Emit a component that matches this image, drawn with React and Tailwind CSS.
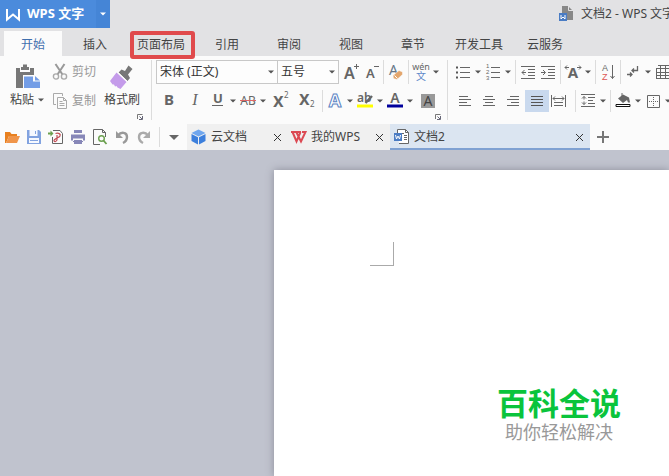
import React, { useState } from "react";

const menuTabs = [
  "开始",
  "插入",
  "页面布局",
  "引用",
  "审阅",
  "视图",
  "章节",
  "开发工具",
  "云服务",
];

function Caret({ className = "text-[#555]" }) {
  return (
    <svg width="6" height="4" viewBox="0 0 6 4" className={className}>
      <path d="M0 0.5h6L3 3.5z" fill="currentColor" />
    </svg>
  );
}

function Icon({ w = 16, h = 16, children }) {
  return (
    <svg
      width={w}
      height={h}
      viewBox={`0 0 ${w} ${h}`}
      fill="none"
      stroke="#666"
      className="shrink-0 overflow-visible"
    >
      {children}
    </svg>
  );
}

// Toolbar button, with a small arrow when it opens a menu
function Tool({ label, width = "w-5", menu, active, children }) {
  return (
    <button
      type="button"
      aria-label={label}
      className={`flex shrink-0 h-full items-center ${
        active ? "bg-[#c9d9ee]" : "hover:bg-[#e4ecf7]"
      }`}
    >
      <span className={`flex justify-center ${width}`}>{children}</span>
      {menu && (
        <span className="w-[10px] flex justify-center">
          <Caret />
        </span>
      )}
    </button>
  );
}

function Sep() {
  return (
    <span className="w-[5px] shrink-0 h-full flex justify-center">
      <span className="w-px h-full bg-[#dcdcdc]"></span>
    </span>
  );
}

function Launcher() {
  return (
    <div className="mt-[2px] h-[6px] flex justify-end">
      <button type="button" aria-label="更多设置" className="flex">
        <Icon w={6} h={6}>
          <path d="M0.5 5V0.5H5.5" stroke="#777" />
          <path d="M5.5 2v3.5H2M2.5 2.5l2.5 2.5" stroke="#667" />
        </Icon>
      </button>
    </div>
  );
}

function FontSelect({ label, options, className }) {
  return (
    <div className={`relative shrink-0 ${className}`}>
      <select
        aria-label={label}
        className="appearance-none w-full h-6 pl-[3px] border border-[#c8c8c8] bg-[#fdfdfd] text-[#333] leading-5"
      >
        {options.map((o) => (
          <option key={o}>{o}</option>
        ))}
      </select>
      <span className="absolute right-1 top-1/2 -translate-y-1/2 pointer-events-none flex">
        <Caret />
      </span>
    </div>
  );
}

function Glyph({ x, y, size, children, fill = "#666", ...rest }) {
  return (
    <text
      x={x}
      y={y}
      fontSize={size}
      fill={fill}
      stroke="none"
      fontFamily="'Noto Sans', 'Noto Sans CJK SC', sans-serif"
      {...rest}
    >
      {children}
    </text>
  );
}

function ClipboardGroup() {
  return (
    <div className="flex flex-col shrink-0 w-[152px] pr-2 border-r border-[#dcdcdc]">
      <div className="flex h-[52px] pl-2">
        <button type="button" className="flex flex-col items-center w-[38px]">
          <span className="h-[30px] flex items-end">
            <Icon w={25} h={25}>
              <path d="M1 3h18v20H1z" fill="#777" stroke="none" />
              <path d="M5 2h10v5H5z" fill="#fbfbfb" stroke="none" />
              <path d="M6 5V2h2V-0.500h4V2h2v3z" fill="#777" stroke="none" />
              <path d="M8 10h12l5 5v9H8z" fill="#fbfbfb" stroke="none" />
              <path d="M9 11.500h9v5h7V23H9z" fill="#739de6" stroke="none" />
              <path d="M20 11l5 4.500h-5z" fill="#739de6" stroke="none" />
            </Icon>
          </span>
          <span className="flex items-center gap-1 h-5 whitespace-nowrap">
            粘贴
            <Caret />
          </span>
        </button>

        <div className="flex flex-col justify-between ml-[6px] text-[#999]">
          <button type="button" className="flex items-center gap-1 h-6">
            <Icon>
              <path d="M3.500 0l7 10.500M12.500 0l-7 10.500" stroke="#999" strokeWidth="2" />
              <circle cx="4" cy="12.500" r="2.600" stroke="#aaa" strokeWidth="1.400" />
              <circle cx="12" cy="12.500" r="2.600" stroke="#aaa" strokeWidth="1.400" />
            </Icon>
            剪切
          </button>
          <button type="button" className="flex items-center gap-1 h-[22px]">
            <Icon>
              <path d="M4 11.500H1.500v-11h9V3" stroke="#aaa" />
              <path d="M5.500 4.500h6l3 3v8h-9z" stroke="#aaa" />
              <path d="M11.500 4.500v3h3M7.500 8.500h3M7.500 10.500h5M7.500 12.500h5" stroke="#aaa" />
            </Icon>
            复制
          </button>
        </div>

        <button type="button" className="flex flex-col items-center ml-2 whitespace-nowrap">
          <span className="h-[30px] flex items-end">
            <Icon w={24} h={25}>
              <path d="M18.500 0.500l4 3.500-4.500 5.500 2 3.500-2.500 3-9-8.500 3-3 3.500 1.500z" fill="#777" stroke="none" />
              <path d="M6.500 7.500l10 9.500-6 7-3-1.500-1-1.500-1.500.5-1-2-1.500 0-2.500-3.500z" fill="#c49bea" stroke="none" />
              <path d="M7 6.500l10 9.500" stroke="#fbfbfb" />
            </Icon>
          </span>
          <span className="h-5 flex items-center">格式刷</span>
        </button>
      </div>
      <Launcher />
    </div>
  );
}

function FontGroup() {
  return (
    <div className="flex flex-col shrink-0 pl-1 pr-[6px] border-r border-[#dcdcdc]">
      <div className="flex h-6">
        <FontSelect
          label="字体"
          options={["宋体 (正文)", "黑体", "楷体"]}
          className="w-[122px]"
        />
        <FontSelect
          label="字号"
          options={["五号", "小四", "四号"]}
          className="w-[62px] -ml-px"
        />
        <Tool label="增大字号" width="w-[26px]">
          <Icon>
            <Glyph x={0} y={15} size={16} fontWeight="600">A</Glyph>
            <path d="M12.500 0v5M10 2.500h5" />
          </Icon>
        </Tool>
        <Tool label="减小字号" width="w-4">
          <Icon>
            <Glyph x={1} y={14} size={13} fontWeight="600">A</Glyph>
            <path d="M9 2.500h5" />
          </Icon>
        </Tool>
        <Sep />
        <Tool label="清除格式">
          <Icon>
            <Glyph x={1} y={11} size={14} fill="#678">A</Glyph>
            <path d="M5 11.500l6-5 3.500 1.500v2.500l-5.500 5-3.500-1z" fill="#e3a66d" stroke="#fbfbfb" strokeWidth="0.500" />
            <path d="M6.500 11.500l3 3" stroke="#fff" />
          </Icon>
        </Tool>
        <Sep />
        <Tool label="拼音指南" menu>
          <Icon w={16} h={18}>
            <Glyph x={8} y={7} size={9} textAnchor="middle">wén</Glyph>
            <Glyph x={8} y={17} size={10} textAnchor="middle" fill="#5b87c9">文</Glyph>
          </Icon>
        </Tool>
      </div>

      <div className="flex h-[22px] mt-[6px]">
        <Tool label="加粗" width="w-[26px]">
          <Icon>
            <Glyph x={8} y={12} size={15} textAnchor="middle" fontWeight="700">B</Glyph>
          </Icon>
        </Tool>
        <Tool label="倾斜" width="w-[26px]">
          <Icon>
            <Glyph
              x={8}
              y={12}
              size={16}
              textAnchor="middle"
              fontStyle="italic"
              fontFamily="'Liberation Serif', serif"
            >
              I
            </Glyph>
          </Icon>
        </Tool>
        <Tool label="下划线" menu>
          <Icon w={12} h={16}>
            <Glyph x={6} y={10} size={13} textAnchor="middle" fontWeight="700">U</Glyph>
            <path d="M0 12.500h11" />
          </Icon>
        </Tool>
        <Tool label="删除线" menu>
          <Icon>
            <Glyph x={8} y={12} size={12} textAnchor="middle">AB</Glyph>
            <path d="M0 7.500h16" stroke="#d66" />
          </Icon>
        </Tool>
        <Tool label="上标" width="w-[26px]">
          <Icon w={16} h={18}>
            <Glyph x={0} y={15} size={19} fontWeight="600">x</Glyph>
            <Glyph x={11} y={6} size={8}>2</Glyph>
          </Icon>
        </Tool>
        <Tool label="下标" width="w-[26px]">
          <Icon w={16} h={18}>
            <Glyph x={0} y={13} size={19} fontWeight="600">x</Glyph>
            <Glyph x={11} y={15} size={8}>2</Glyph>
          </Icon>
        </Tool>
        <Sep />
        <Tool label="文字效果" menu>
          <Icon>
            <Glyph x={8} y={14} size={18} textAnchor="middle" fontWeight="700" fill="#fff" stroke="#5b84c4">A</Glyph>
          </Icon>
        </Tool>
        <Tool label="突出显示" menu>
          <Icon>
            <Glyph x={0} y={9} size={12} fontWeight="600">ab</Glyph>
            <path d="M8.500 10l6.500-7" strokeWidth="2.400" />
            <path d="M0 11.500h16v3H0z" fill="#ff0" stroke="none" />
          </Icon>
        </Tool>
        <Tool label="字体颜色" menu>
          <Icon>
            <Glyph x={8} y={10} size={14} textAnchor="middle" fontWeight="600">A</Glyph>
            <path d="M0 11.500h16v3H0z" fill="#00009c" stroke="none" />
          </Icon>
        </Tool>
        <Tool label="字符底纹" width="w-[26px]">
          <Icon w={14} h={14}>
            <path d="M0 0h14v14H0z" fill="#999" stroke="none" />
            <Glyph x={7} y={12} size={14} textAnchor="middle" fill="#444">A</Glyph>
          </Icon>
        </Tool>
      </div>
      <Launcher />
    </div>
  );
}

function ParagraphGroup() {
  return (
    <div className="flex flex-col shrink-0 pl-[5px]">
      <div className="flex h-6">
        <Tool label="项目符号" menu>
          <Icon>
            <path d="M5 3.500h10M5 8.500h10M5 13.500h10" />
            <path d="M1 2.500h2v2H1zM1 7.500h2v2H1zM1 12.500h2v2H1z" fill="#555" stroke="none" />
          </Icon>
        </Tool>
        <Tool label="编号" menu>
          <Icon>
            <path d="M6 3.500h9M6 8.500h9M6 13.500h9" />
            <Glyph x={1} y={4} size={6} fontFamily="'Liberation Sans', sans-serif">1</Glyph>
            <Glyph x={1} y={10} size={6} fontFamily="'Liberation Sans', sans-serif">2</Glyph>
            <Glyph x={1} y={16} size={6} fontFamily="'Liberation Sans', sans-serif">3</Glyph>
          </Icon>
        </Tool>
        <Sep />
        <Tool label="减少缩进">
          <Icon w={14} h={13}>
            <path d="M0 0.500h14M7 3.500h7M7 6.500h7M7 9.500h7M0 12.500h14M1 6.500h4M3.500 4l-2.500 2.500 2.500 2.500" />
          </Icon>
        </Tool>
        <Tool label="增加缩进">
          <Icon w={14} h={13}>
            <path d="M0 0.500h14M7 3.500h7M7 6.500h7M7 9.500h7M0 12.500h14M0 6.500h4M2 4l2.500 2.500-2.500 2.500" />
          </Icon>
        </Tool>
        <Sep />
        <Tool label="中文版式" menu>
          <Icon>
            <Glyph x={8} y={14} size={15} textAnchor="middle" fontWeight="700">A</Glyph>
            <path d="M0 3.500h4M2 1.500l-2 2 2 2M12 3.500h4M14 1.500l2 2-2 2" />
          </Icon>
        </Tool>
        <Sep />
        <Tool label="排序">
          <Icon>
            <Glyph x={2} y={7} size={9} fontFamily="'Liberation Sans', sans-serif">A</Glyph>
            <Glyph x={2} y={16} size={9} fill="#d55" fontFamily="'Liberation Sans', sans-serif">Z</Glyph>
            <path d="M12.500 1v13.500M10.500 12l2 2.500 2-2.500" />
          </Icon>
        </Tool>
        <Sep />
        <Tool label="显示段落标记" menu>
          <Icon w={14} h={14}>
            <path d="M11.500 1v4.500H6M8 3.500l-2 2 2 2M1 9.500h5M4 7.500l2 2-2 2" strokeWidth="1.300" />
          </Icon>
        </Tool>
        <Tool label="表格" menu>
          <Icon w={14} h={14}>
            <path d="M2 0.500h12M0.500 3.500h13M0.500 7.500h13M0.500 10.500h13M0.500 13.500h13M0.500 3v11M4.500 0v14M9.500 0v14M13.500 0v14" />
          </Icon>
        </Tool>
      </div>

      <div className="flex h-[22px] mt-[6px]">
        <Tool label="左对齐" width="w-6">
          <Icon w={12} h={10}>
            <path d="M0 0.500h9M0 3.500h12M0 6.500h8M0 9.500h12" />
          </Icon>
        </Tool>
        <Tool label="居中" width="w-6">
          <Icon w={12} h={10}>
            <path d="M2 0.500h8M0 3.500h12M2 6.500h8M0 9.500h12" />
          </Icon>
        </Tool>
        <Tool label="右对齐" width="w-6">
          <Icon w={12} h={10}>
            <path d="M3 0.500h9M0 3.500h12M4 6.500h8M0 9.500h12" />
          </Icon>
        </Tool>
        <Tool label="两端对齐" width="w-6" active>
          <Icon w={12} h={10}>
            <path d="M0 0.500h12M0 3.500h12M0 6.500h12M0 9.500h12" stroke="#555" />
          </Icon>
        </Tool>
        <Tool label="分散对齐" width="w-5">
          <Icon w={16} h={12}>
            <path d="M0.500 0v12M14.500 0v12M2 3.500h11M4 1.500l-2 2 2 2M11 1.500l2 2-2 2M3 7.500h9M3 10.500h9" />
          </Icon>
        </Tool>
        <span className="w-1"></span>
        <Sep />
        <Tool label="行距" menu>
          <Icon w={14} h={14}>
            <path d="M0 0.500h14M7 3.500h7M7 6.500h5M7 9.500h7M0 12.500h14M3 2.500v3M1 4.500l2-2 2 2M3 7.500v3M1 8.500l2 2 2-2" />
          </Icon>
        </Tool>
        <Sep />
        <Tool label="底纹颜色" menu>
          <Icon w={16} h={16}>
            <path d="M3 5.500l5-4 6 3 1 5h-2l-1-2.500L8 10z" fill="#666" stroke="none" />
            <path d="M7 0v4" />
            <path d="M1 11.500h14v2H1z" stroke="#111" fill="#fff" />
          </Icon>
        </Tool>
        <Tool label="边框" menu>
          <Icon w={13} h={13}>
            <path d="M0.500 0.500h12v12h-12z" />
            <path d="M6.500 2v9M2 6.500h9" strokeDasharray="1 1" />
          </Icon>
        </Tool>
      </div>
      <Launcher />
    </div>
  );
}

function QuickAccess() {
  return (
    <div className="flex shrink-0 h-full items-center pl-px">
      <Tool label="打开" width="w-[22px]">
        <Icon>
          <path d="M1 3h5l1.500 2H13v2H5l-3 7H1z" fill="#e8801f" stroke="none" />
          <path d="M5 7h11l-3 7H2z" fill="#f0954a" stroke="none" />
        </Icon>
      </Tool>
      <Tool label="保存" width="w-[22px]">
        <Icon>
          <path d="M1 1h12l2 2v12H1z" fill="#82a3e0" stroke="none" />
          <path d="M3.500 1h8v6h-8zM3 9h10v5H3z" fill="#f6f9ff" stroke="none" />
          <path d="M9.500 2v3M4 11.500h8" stroke="#82a3e0" />
        </Icon>
      </Tool>
      <Tool label="输出为PDF" width="w-[22px]">
        <Icon>
          <path d="M5 1.500h7l2.500 3v10h-10V8" />
          <path d="M0 4.500h4" stroke="#6ba04f" strokeWidth="2" />
          <path d="M2.500 1.500l3 3-3 3z" fill="#6ba04f" stroke="none" />
          <path d="M7.500 4.500c3-1 5.500.500 4.500 2.500S9 8.500 9 9s-3 1-3 2.500 2 1.500 3-.5V6" stroke="#c44d55" strokeWidth="1.200" />
        </Icon>
      </Tool>
      <Tool label="打印" width="w-[22px]">
        <Icon>
          <path d="M4 1h8v3H4zM1 5.500h14v6h-2v-2H3v2H1zM4 11h8v4H4z" fill="#8787b8" stroke="none" />
          <path d="M3 12.500h10" stroke="#8787b8" />
        </Icon>
      </Tool>
      <Tool label="打印预览" width="w-[22px]">
        <Icon>
          <path d="M8 15.500H1.500v-15h9l3 3V8" />
          <path d="M10.500 0.500v3h3" />
          <circle cx="9.500" cy="9.500" r="2.800" stroke="#6ba04f" strokeWidth="1.400" />
          <path d="M11.500 11.500l3 3.500" stroke="#6ba04f" strokeWidth="1.800" />
        </Icon>
      </Tool>
      <Tool label="撤销" width="w-[22px]">
        <Icon w={14} h={14}>
          <path d="M3 5.500C6 1.500 12 2 12 7c0 3-2 5-4 6" stroke="#999" strokeWidth="2.400" />
          <path d="M1 1v7h7z" fill="#999" stroke="none" />
        </Icon>
      </Tool>
      <Tool label="恢复" width="w-[22px]">
        <Icon w={14} h={14}>
          <path d="M11 5.500C8 1.500 2 2 2 7c0 3 2 5 4 6" stroke="#aaa" strokeWidth="2.400" />
          <path d="M13 1v7H6z" fill="#aaa" stroke="none" />
        </Icon>
      </Tool>
      <span className="w-px h-5 ml-1 bg-[#dcdcdc]"></span>
      <button type="button" aria-label="文档列表" className="w-[27px] flex justify-center">
        <svg width="10" height="5" viewBox="0 0 10 5">
          <path d="M0 0h10L5 5z" fill="#666" />
        </svg>
      </button>
    </div>
  );
}

function CloseButton() {
  return (
    <button type="button" aria-label="关闭" className="ml-auto flex">
      <Icon w={7} h={7}>
        <path d="M0 0l7 7M7 0l-7 7" stroke="#333" />
      </Icon>
    </button>
  );
}

function WpsMark() {
  return (
    <Icon w={16} h={14}>
      <path
        d="M0 2h10M1.500 2l4 9.500L9.500 2M5.500 2.500l4.500 9L14.500 2H11"
        stroke="#dc4a54"
        strokeWidth="2"
      />
    </Icon>
  );
}

function DocumentTabs() {
  return (
    <div className="flex items-center h-[26px] bg-[#fbfbfb]">
      <QuickAccess />
      <div className="flex items-center h-full w-[102px] shrink-0 gap-[5px] pl-1 pr-2 bg-[#f0f0f0]">
        <Icon w={15} h={15}>
          <path d="M7.500 -0.500L14.500 3 7.500 6.500 0.500 3z" fill="#6fa6ee" stroke="none" />
          <path d="M0.500 4L7 7.300V14.500L0.500 11z" fill="#3c7fdc" stroke="none" />
          <path d="M14.500 4L8 7.300V14.500l6.500-3.500z" fill="#3c7fdc" stroke="none" />
        </Icon>
        <span>云文档</span>
        <CloseButton />
      </div>
      <div className="flex items-center h-full w-[101px] shrink-0 gap-1 pl-[2px] pr-[7px] bg-[#f0f0f0]">
        <WpsMark />
        <span>我的WPS</span>
        <CloseButton />
      </div>
      <div className="flex items-center h-full w-[200px] shrink-0 gap-1 pl-1 pr-[7px] pt-[2px] bg-[#dbe5f1] border-b-2 border-[#7fa1d2]">
        <Icon>
          <path d="M3.500 4V0.500h8l3 3v11H5" fill="#fff" />
          <path d="M11.500 0.500v3h3M7 4.500h3M10 6.500h3M10 8.500h3M10 10.500h3" />
          <path d="M0 4h8v8H0z" fill="#4a7cc4" stroke="none" />
          <path d="M1.500 6l1 4 1.500-3 1.500 3 1-4" stroke="#fff" />
        </Icon>
        <span>文档2</span>
        <CloseButton />
      </div>
      <button type="button" aria-label="新建" className="ml-[7px] flex">
        <Icon w={12} h={12}>
          <path d="M6 0v12M0 6h12" stroke="#777" strokeWidth="2" />
        </Icon>
      </button>
    </div>
  );
}

function App() {
  const [activeTab, setActiveTab] = useState("开始");

  return (
    <div className="min-h-screen flex flex-col overflow-hidden whitespace-nowrap bg-[#c0c3ce] text-xs text-[#444] font-['Noto_Sans','Noto_Sans_CJK_SC',sans-serif]">
      {/* Title bar */}
      <header className="bg-[#e2e2e4]">
        <div className="flex h-[31px] overflow-hidden">
          <button
            type="button"
            className="flex shrink-0 items-center h-7 w-[110px] pl-[6px] bg-[#4b8bdc] text-white text-[13px] font-bold"
          >
            <Icon w={15} h={13}>
              <path d="M1 1v10.500l6-5 6 5V1" stroke="#fff" strokeWidth="2" />
            </Icon>
            <span className="ml-[6px]">WPS 文字</span>
            <span className="ml-auto h-full w-[14px] flex items-center justify-center bg-[#4585d6]">
              <Caret className="text-white" />
            </span>
          </button>
          <div className="flex shrink-0 items-center h-7 ml-[449px] gap-[6px]">
            <Icon>
              <path d="M3 0h6l5 5v9H3z" fill="#888" stroke="none" />
              <path d="M9.500 0v4.500H14" stroke="#e2e2e4" />
              <path d="M0 7h8v8H0z" fill="#4a7cc4" stroke="none" />
              <path d="M2 9v4l2-2 2 2V9" stroke="#fff" />
            </Icon>
            <h1>文档2 - WPS 文字</h1>
          </div>
        </div>

        <nav className="flex h-[25px] pl-1 gap-1">
          {menuTabs.map((tab) => (
            <button
              key={tab}
              type="button"
              onClick={() => setActiveTab(tab)}
              className={`relative shrink-0 min-w-[58px] px-[9px] pt-[2px] ${
                activeTab === tab ? "bg-[#fbfbfb] text-[#3f6fae]" : ""
              }`}
            >
              {tab}
              {tab === "页面布局" && (
                <span className="absolute z-10 left-[2px] -right-px top-0 h-7 border-4 border-[#e04a4c] rounded-[3px]"></span>
              )}
            </button>
          ))}
        </nav>
      </header>

      {/* Ribbon */}
      <section className="flex py-1 bg-[#fbfbfb]">
        <ClipboardGroup />
        <FontGroup />
        <ParagraphGroup />
      </section>

      <DocumentTabs />

      {/* Document */}
      <main className="flex-1 flex pt-5">
        <article className="flex-1 ml-[274px] pt-[72px] pb-7 bg-white shadow-[0_0_8px_#8b8d99]">
          <div className="ml-24 w-6 h-6 border-r border-b border-[#aaa]"></div>
          <div className="mt-[118px] mr-12 w-fit ml-auto text-center">
            <p className="text-[31px] leading-[38px] font-bold text-[#0ac43c]">百科全说</p>
            <p className="text-[18px] leading-5 text-[#999]">助你轻松解决</p>
          </div>
        </article>
      </main>
    </div>
  );
}

export default App;
